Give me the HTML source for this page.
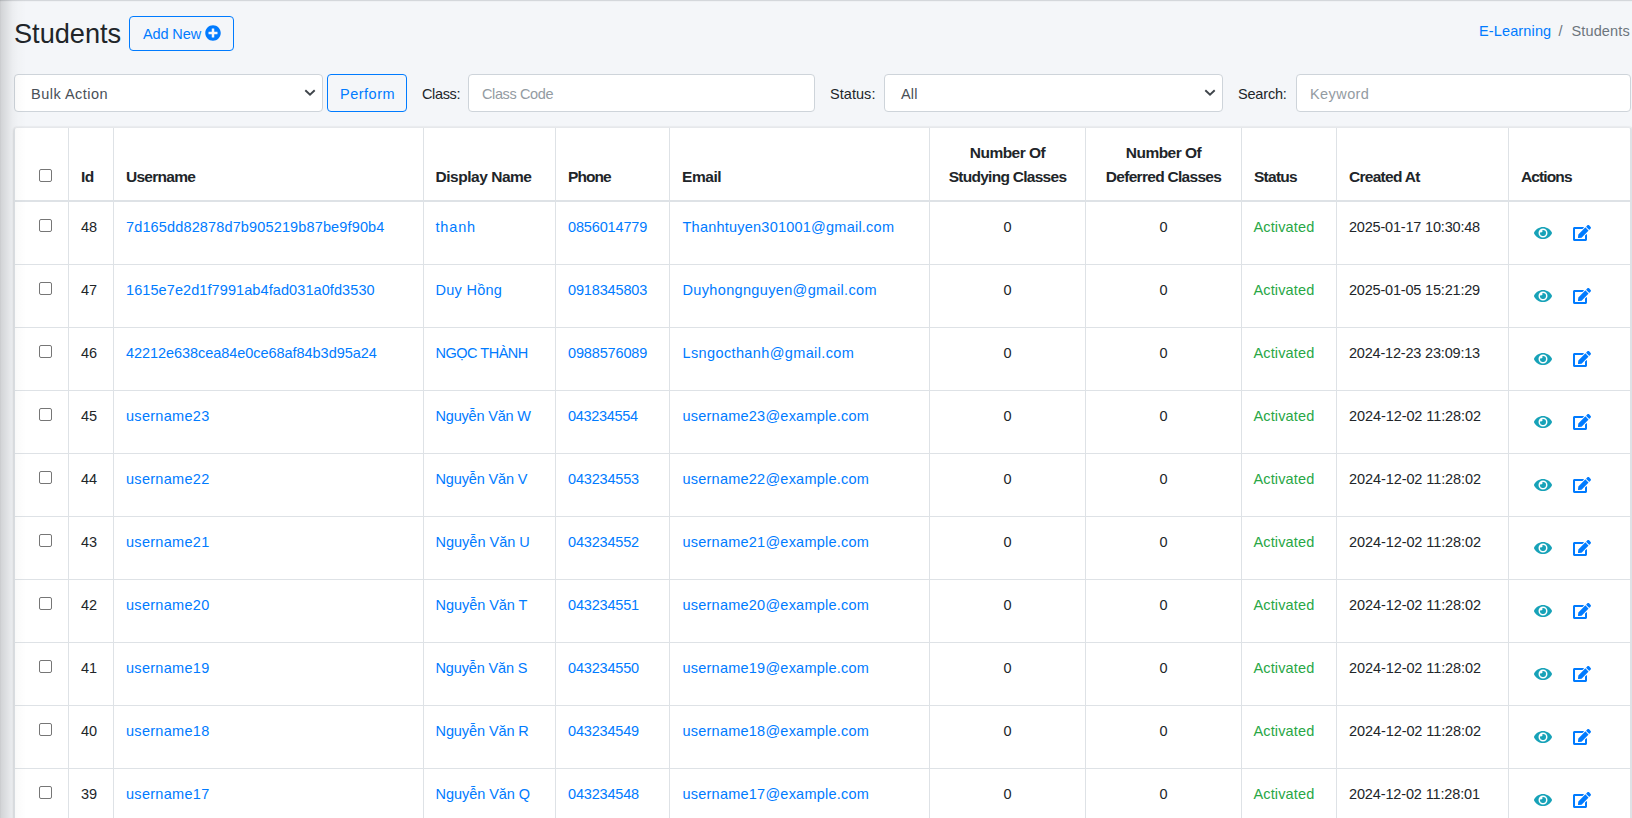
<!DOCTYPE html><html><head><meta charset="utf-8"><title>Students</title><style>
*{box-sizing:border-box}
html,body{margin:0;padding:0}
body{width:1632px;height:818px;overflow:hidden;position:relative;background:#f4f6f9;font-family:"Liberation Sans",sans-serif;color:#212529;font-size:14.5px}
.a{position:absolute;white-space:nowrap}
.t{position:absolute;white-space:nowrap;line-height:24px;height:24px}
.lnk{color:#007bff}
.b{font-weight:bold;font-size:15.5px}
.box{position:absolute;background:#fff;border:1px solid #ced4da;border-radius:4px}
.btn{position:absolute;border:1px solid #007bff;border-radius:4px;color:#007bff}
.hl{position:absolute;background:#dee2e6;height:1px}
.vl{position:absolute;background:#dee2e6;width:1px}
.cb{position:absolute;width:13px;height:13px;border:1px solid #767676;border-radius:2px;background:#fff}
.ctr{text-align:center}
</style></head><body>
<div class="a" style="left:14px;top:16px;letter-spacing:-0.015px;font-size:27.2px;line-height:36px">Students</div>
<div class="btn" style="left:129px;top:16px;width:105px;height:35px"><div class="t" style="left:13px;top:5px;letter-spacing:-0.119px">Add New</div><span class="a" style="left:75px;top:8px"><svg viewBox="0 0 512 512" width="16" height="16" style="display:block"><path fill="#007bff" d="M256 8C119 8 8 119 8 256s111 248 248 248 248-111 248-248S393 8 256 8zm144 276c0 6.6-5.4 12-12 12h-92v92c0 6.6-5.4 12-12 12h-56c-6.6 0-12-5.4-12-12v-92h-92c-6.6 0-12-5.4-12-12v-56c0-6.6 5.4-12 12-12h92v-92c0-6.6 5.4-12 12-12h56c6.6 0 12 5.4 12 12v92h92c6.6 0 12 5.4 12 12v56z"/></svg></span></div>
<div class="t lnk" style="left:1479px;top:19px;letter-spacing:0.136px">E-Learning</div>
<div class="t" style="left:1558.5px;top:19px;color:#6c757d">/</div>
<div class="t" style="left:1571.5px;top:19px;letter-spacing:0.128px;color:#6c757d">Students</div>
<div class="box" style="left:14px;top:74px;width:309px;height:38px"><div class="t" style="left:16px;top:7px;letter-spacing:0.49px;color:#495057">Bulk Action</div><span class="a" style="left:289px;top:14px"><svg width="12" height="8" viewBox="0 0 12 8" style="display:block"><path d="M1.3 1.3 L6 5.8 L10.7 1.3" fill="none" stroke="#3f454b" stroke-width="1.9"/></svg></span></div>
<div class="btn" style="left:327px;top:74px;width:80px;height:38px"><div class="t" style="left:12px;top:7px;letter-spacing:0.5px">Perform</div></div>
<div class="t" style="left:422px;top:82px;letter-spacing:-0.36px">Class:</div>
<div class="box" style="left:468px;top:74px;width:347px;height:38px"><div class="t" style="left:13px;top:7px;letter-spacing:-0.389px;color:#939ba2">Class Code</div></div>
<div class="t" style="left:830px;top:82px;letter-spacing:0.048px">Status:</div>
<div class="box" style="left:884px;top:74px;width:339px;height:38px"><div class="t" style="left:16px;top:7px;letter-spacing:0.2px;color:#495057">All</div><span class="a" style="left:319px;top:14px"><svg width="12" height="8" viewBox="0 0 12 8" style="display:block"><path d="M1.3 1.3 L6 5.8 L10.7 1.3" fill="none" stroke="#3f454b" stroke-width="1.9"/></svg></span></div>
<div class="t" style="left:1238px;top:82px;letter-spacing:-0.183px">Search:</div>
<div class="box" style="left:1296px;top:74px;width:335px;height:38px"><div class="t" style="left:13px;top:7px;letter-spacing:0.417px;color:#939ba2">Keyword</div></div>
<div class="a" style="left:14px;top:127px;width:1618px;height:700px;background:#fff;border-radius:3px 3px 0 0;box-shadow:0 0 1px rgba(0,0,0,.125),0 1px 3px rgba(0,0,0,.2)"></div>
<div class="a" style="left:17px;top:127px;width:1611px;height:1px;background:#e6e8eb"></div>
<div class="vl" style="left:14px;top:130px;height:700px"></div>
<div class="a" style="left:1630px;top:130px;width:2px;height:700px;background:#dee2e6"></div>
<div class="a" style="left:14px;top:127px;width:4px;height:4px;border-top-left-radius:3px;border-left:1px solid #dee2e6;border-top:1px solid #e6e8eb"></div>
<div class="a" style="left:1627px;top:127px;width:5px;height:4px;border-top-right-radius:3px;border-right:2px solid #dee2e6;border-top:1px solid #e6e8eb"></div>
<div class="a" style="left:14px;top:200px;width:1617px;height:2px;background:#dee2e6"></div>
<div class="hl" style="left:14px;top:264px;width:1617px"></div>
<div class="hl" style="left:14px;top:327px;width:1617px"></div>
<div class="hl" style="left:14px;top:390px;width:1617px"></div>
<div class="hl" style="left:14px;top:453px;width:1617px"></div>
<div class="hl" style="left:14px;top:516px;width:1617px"></div>
<div class="hl" style="left:14px;top:579px;width:1617px"></div>
<div class="hl" style="left:14px;top:642px;width:1617px"></div>
<div class="hl" style="left:14px;top:705px;width:1617px"></div>
<div class="hl" style="left:14px;top:768px;width:1617px"></div>
<div class="hl" style="left:14px;top:831px;width:1617px"></div>
<div class="vl" style="left:68px;top:128px;height:700px"></div>
<div class="vl" style="left:113px;top:128px;height:700px"></div>
<div class="vl" style="left:423px;top:128px;height:700px"></div>
<div class="vl" style="left:555px;top:128px;height:700px"></div>
<div class="vl" style="left:669px;top:128px;height:700px"></div>
<div class="vl" style="left:929px;top:128px;height:700px"></div>
<div class="vl" style="left:1085px;top:128px;height:700px"></div>
<div class="vl" style="left:1241px;top:128px;height:700px"></div>
<div class="vl" style="left:1336px;top:128px;height:700px"></div>
<div class="vl" style="left:1508px;top:128px;height:700px"></div>
<div class="cb" style="left:39px;top:169px"></div>
<div class="t b" style="left:81px;top:165px;letter-spacing:-0.5px">Id</div>
<div class="t b" style="left:126px;top:165px;letter-spacing:-0.728px">Username</div>
<div class="t b" style="left:435.5px;top:165px;letter-spacing:-0.472px">Display Name</div>
<div class="t b" style="left:568px;top:165px;letter-spacing:-0.925px">Phone</div>
<div class="t b" style="left:682px;top:165px;letter-spacing:-0.425px">Email</div>
<div class="t b" style="left:930px;top:141px;letter-spacing:-0.514px;width:155px;text-align:center">Number Of</div>
<div class="t b" style="left:930px;top:165px;letter-spacing:-0.727px;width:155px;text-align:center">Studying Classes</div>
<div class="t b" style="left:1086px;top:141px;letter-spacing:-0.514px;width:155px;text-align:center">Number Of</div>
<div class="t b" style="left:1086px;top:165px;letter-spacing:-0.707px;width:155px;text-align:center">Deferred Classes</div>
<div class="t b" style="left:1254px;top:165px;letter-spacing:-0.74px">Status</div>
<div class="t b" style="left:1349px;top:165px;letter-spacing:-0.712px">Created At</div>
<div class="t b" style="left:1521px;top:165px;letter-spacing:-0.884px">Actions</div>
<div class="cb" style="left:39px;top:219px"></div>
<div class="t" style="left:81px;top:215px">48</div>
<div class="t lnk" style="left:126px;top:215px;letter-spacing:0.14px">7d165dd82878d7b905219b87be9f90b4</div>
<div class="t lnk" style="left:435.5px;top:215px;letter-spacing:0.825px">thanh</div>
<div class="t lnk" style="left:568px;top:215px;letter-spacing:-0.145px">0856014779</div>
<div class="t lnk" style="left:682.5px;top:215px;letter-spacing:0.228px">Thanhtuyen301001@gmail.com</div>
<div class="t ctr" style="left:930px;width:155px;top:215px">0</div>
<div class="t ctr" style="left:1086px;width:155px;top:215px">0</div>
<div class="t" style="left:1253.5px;top:215px;letter-spacing:0.134px;color:#28a745">Activated</div>
<div class="t" style="left:1349px;top:215px;letter-spacing:-0.194px">2025-01-17 10:30:48</div>
<div class="a" style="left:1534px;top:225px"><svg viewBox="0 0 576 512" width="18" height="16" style="display:block"><path fill="#17a2b8" d="M572.52 241.4C518.29 135.59 410.93 64 288 64S57.68 135.64 3.48 241.41a32.35 32.35 0 0 0 0 29.19C57.71 376.41 165.07 448 288 448s230.32-71.64 284.52-177.41a32.35 32.35 0 0 0 0-29.19zM288 400a144 144 0 1 1 144-144 143.93 143.93 0 0 1-144 144zm0-240a95.31 95.31 0 0 0-25.31 3.79 47.85 47.85 0 0 1-66.9 66.9A95.78 95.78 0 1 0 288 160z"/></svg></div>
<div class="a" style="left:1573px;top:225px"><svg viewBox="0 0 576 512" width="18" height="16" style="display:block"><path fill="#007bff" d="M402.6 83.2l90.2 90.2c3.8 3.8 3.8 10 0 13.8L274.4 405.6l-92.8 10.3c-12.4 1.4-22.9-9.1-21.5-21.5l10.3-92.8L388.8 83.2c3.8-3.8 10-3.8 13.8 0zm162-22.9l-48.8-48.8c-15.2-15.2-39.9-15.2-55.2 0l-35.4 35.4c-3.8 3.8-3.8 10 0 13.8l90.2 90.2c3.8 3.8 10 3.8 13.8 0l35.4-35.4c15.2-15.3 15.2-40 0-55.2zM384 346.2V448H64V128h229.8c3.2 0 6.2-1.3 8.5-3.5l40-40c7.6-7.6 2.2-20.5-8.5-20.5H48C21.5 64 0 85.5 0 112v352c0 26.5 21.5 48 48 48h352c26.5 0 48-21.5 48-48V306.2c0-10.7-12.9-16-20.5-8.5l-40 40c-2.2 2.3-3.5 5.3-3.5 8.5z"/></svg></div>
<div class="cb" style="left:39px;top:282px"></div>
<div class="t" style="left:81px;top:278px">47</div>
<div class="t lnk" style="left:126px;top:278px;letter-spacing:0.086px">1615e7e2d1f7991ab4fad031a0fd3530</div>
<div class="t lnk" style="left:435.5px;top:278px;letter-spacing:0.271px">Duy Hồng</div>
<div class="t lnk" style="left:568px;top:278px;letter-spacing:-0.145px">0918345803</div>
<div class="t lnk" style="left:682.5px;top:278px;letter-spacing:0.346px">Duyhongnguyen@gmail.com</div>
<div class="t ctr" style="left:930px;width:155px;top:278px">0</div>
<div class="t ctr" style="left:1086px;width:155px;top:278px">0</div>
<div class="t" style="left:1253.5px;top:278px;letter-spacing:0.134px;color:#28a745">Activated</div>
<div class="t" style="left:1349px;top:278px;letter-spacing:-0.194px">2025-01-05 15:21:29</div>
<div class="a" style="left:1534px;top:288px"><svg viewBox="0 0 576 512" width="18" height="16" style="display:block"><path fill="#17a2b8" d="M572.52 241.4C518.29 135.59 410.93 64 288 64S57.68 135.64 3.48 241.41a32.35 32.35 0 0 0 0 29.19C57.71 376.41 165.07 448 288 448s230.32-71.64 284.52-177.41a32.35 32.35 0 0 0 0-29.19zM288 400a144 144 0 1 1 144-144 143.93 143.93 0 0 1-144 144zm0-240a95.31 95.31 0 0 0-25.31 3.79 47.85 47.85 0 0 1-66.9 66.9A95.78 95.78 0 1 0 288 160z"/></svg></div>
<div class="a" style="left:1573px;top:288px"><svg viewBox="0 0 576 512" width="18" height="16" style="display:block"><path fill="#007bff" d="M402.6 83.2l90.2 90.2c3.8 3.8 3.8 10 0 13.8L274.4 405.6l-92.8 10.3c-12.4 1.4-22.9-9.1-21.5-21.5l10.3-92.8L388.8 83.2c3.8-3.8 10-3.8 13.8 0zm162-22.9l-48.8-48.8c-15.2-15.2-39.9-15.2-55.2 0l-35.4 35.4c-3.8 3.8-3.8 10 0 13.8l90.2 90.2c3.8 3.8 10 3.8 13.8 0l35.4-35.4c15.2-15.3 15.2-40 0-55.2zM384 346.2V448H64V128h229.8c3.2 0 6.2-1.3 8.5-3.5l40-40c7.6-7.6 2.2-20.5-8.5-20.5H48C21.5 64 0 85.5 0 112v352c0 26.5 21.5 48 48 48h352c26.5 0 48-21.5 48-48V306.2c0-10.7-12.9-16-20.5-8.5l-40 40c-2.2 2.3-3.5 5.3-3.5 8.5z"/></svg></div>
<div class="cb" style="left:39px;top:345px"></div>
<div class="t" style="left:81px;top:341px">46</div>
<div class="t lnk" style="left:126px;top:341px;letter-spacing:-0.053px">42212e638cea84e0ce68af84b3d95a24</div>
<div class="t lnk" style="left:435.5px;top:341px;letter-spacing:-0.488px">NGỌC THÀNH</div>
<div class="t lnk" style="left:568px;top:341px;letter-spacing:-0.145px">0988576089</div>
<div class="t lnk" style="left:682.5px;top:341px;letter-spacing:0.375px">Lsngocthanh@gmail.com</div>
<div class="t ctr" style="left:930px;width:155px;top:341px">0</div>
<div class="t ctr" style="left:1086px;width:155px;top:341px">0</div>
<div class="t" style="left:1253.5px;top:341px;letter-spacing:0.134px;color:#28a745">Activated</div>
<div class="t" style="left:1349px;top:341px;letter-spacing:-0.194px">2024-12-23 23:09:13</div>
<div class="a" style="left:1534px;top:351px"><svg viewBox="0 0 576 512" width="18" height="16" style="display:block"><path fill="#17a2b8" d="M572.52 241.4C518.29 135.59 410.93 64 288 64S57.68 135.64 3.48 241.41a32.35 32.35 0 0 0 0 29.19C57.71 376.41 165.07 448 288 448s230.32-71.64 284.52-177.41a32.35 32.35 0 0 0 0-29.19zM288 400a144 144 0 1 1 144-144 143.93 143.93 0 0 1-144 144zm0-240a95.31 95.31 0 0 0-25.31 3.79 47.85 47.85 0 0 1-66.9 66.9A95.78 95.78 0 1 0 288 160z"/></svg></div>
<div class="a" style="left:1573px;top:351px"><svg viewBox="0 0 576 512" width="18" height="16" style="display:block"><path fill="#007bff" d="M402.6 83.2l90.2 90.2c3.8 3.8 3.8 10 0 13.8L274.4 405.6l-92.8 10.3c-12.4 1.4-22.9-9.1-21.5-21.5l10.3-92.8L388.8 83.2c3.8-3.8 10-3.8 13.8 0zm162-22.9l-48.8-48.8c-15.2-15.2-39.9-15.2-55.2 0l-35.4 35.4c-3.8 3.8-3.8 10 0 13.8l90.2 90.2c3.8 3.8 10 3.8 13.8 0l35.4-35.4c15.2-15.3 15.2-40 0-55.2zM384 346.2V448H64V128h229.8c3.2 0 6.2-1.3 8.5-3.5l40-40c7.6-7.6 2.2-20.5-8.5-20.5H48C21.5 64 0 85.5 0 112v352c0 26.5 21.5 48 48 48h352c26.5 0 48-21.5 48-48V306.2c0-10.7-12.9-16-20.5-8.5l-40 40c-2.2 2.3-3.5 5.3-3.5 8.5z"/></svg></div>
<div class="cb" style="left:39px;top:408px"></div>
<div class="t" style="left:81px;top:404px">45</div>
<div class="t lnk" style="left:126px;top:404px;letter-spacing:0.29px">username23</div>
<div class="t lnk" style="left:435.5px;top:404px;letter-spacing:-0.19px">Nguyễn Văn W</div>
<div class="t lnk" style="left:568px;top:404px;letter-spacing:-0.3px">043234554</div>
<div class="t lnk" style="left:682.5px;top:404px;letter-spacing:0.228px">username23@example.com</div>
<div class="t ctr" style="left:930px;width:155px;top:404px">0</div>
<div class="t ctr" style="left:1086px;width:155px;top:404px">0</div>
<div class="t" style="left:1253.5px;top:404px;letter-spacing:0.134px;color:#28a745">Activated</div>
<div class="t" style="left:1349px;top:404px;letter-spacing:-0.083px">2024-12-02 11:28:02</div>
<div class="a" style="left:1534px;top:414px"><svg viewBox="0 0 576 512" width="18" height="16" style="display:block"><path fill="#17a2b8" d="M572.52 241.4C518.29 135.59 410.93 64 288 64S57.68 135.64 3.48 241.41a32.35 32.35 0 0 0 0 29.19C57.71 376.41 165.07 448 288 448s230.32-71.64 284.52-177.41a32.35 32.35 0 0 0 0-29.19zM288 400a144 144 0 1 1 144-144 143.93 143.93 0 0 1-144 144zm0-240a95.31 95.31 0 0 0-25.31 3.79 47.85 47.85 0 0 1-66.9 66.9A95.78 95.78 0 1 0 288 160z"/></svg></div>
<div class="a" style="left:1573px;top:414px"><svg viewBox="0 0 576 512" width="18" height="16" style="display:block"><path fill="#007bff" d="M402.6 83.2l90.2 90.2c3.8 3.8 3.8 10 0 13.8L274.4 405.6l-92.8 10.3c-12.4 1.4-22.9-9.1-21.5-21.5l10.3-92.8L388.8 83.2c3.8-3.8 10-3.8 13.8 0zm162-22.9l-48.8-48.8c-15.2-15.2-39.9-15.2-55.2 0l-35.4 35.4c-3.8 3.8-3.8 10 0 13.8l90.2 90.2c3.8 3.8 10 3.8 13.8 0l35.4-35.4c15.2-15.3 15.2-40 0-55.2zM384 346.2V448H64V128h229.8c3.2 0 6.2-1.3 8.5-3.5l40-40c7.6-7.6 2.2-20.5-8.5-20.5H48C21.5 64 0 85.5 0 112v352c0 26.5 21.5 48 48 48h352c26.5 0 48-21.5 48-48V306.2c0-10.7-12.9-16-20.5-8.5l-40 40c-2.2 2.3-3.5 5.3-3.5 8.5z"/></svg></div>
<div class="cb" style="left:39px;top:471px"></div>
<div class="t" style="left:81px;top:467px">44</div>
<div class="t lnk" style="left:126px;top:467px;letter-spacing:0.29px">username22</div>
<div class="t lnk" style="left:435.5px;top:467px;letter-spacing:-0.135px">Nguyễn Văn V</div>
<div class="t lnk" style="left:568px;top:467px;letter-spacing:-0.175px">043234553</div>
<div class="t lnk" style="left:682.5px;top:467px;letter-spacing:0.228px">username22@example.com</div>
<div class="t ctr" style="left:930px;width:155px;top:467px">0</div>
<div class="t ctr" style="left:1086px;width:155px;top:467px">0</div>
<div class="t" style="left:1253.5px;top:467px;letter-spacing:0.134px;color:#28a745">Activated</div>
<div class="t" style="left:1349px;top:467px;letter-spacing:-0.083px">2024-12-02 11:28:02</div>
<div class="a" style="left:1534px;top:477px"><svg viewBox="0 0 576 512" width="18" height="16" style="display:block"><path fill="#17a2b8" d="M572.52 241.4C518.29 135.59 410.93 64 288 64S57.68 135.64 3.48 241.41a32.35 32.35 0 0 0 0 29.19C57.71 376.41 165.07 448 288 448s230.32-71.64 284.52-177.41a32.35 32.35 0 0 0 0-29.19zM288 400a144 144 0 1 1 144-144 143.93 143.93 0 0 1-144 144zm0-240a95.31 95.31 0 0 0-25.31 3.79 47.85 47.85 0 0 1-66.9 66.9A95.78 95.78 0 1 0 288 160z"/></svg></div>
<div class="a" style="left:1573px;top:477px"><svg viewBox="0 0 576 512" width="18" height="16" style="display:block"><path fill="#007bff" d="M402.6 83.2l90.2 90.2c3.8 3.8 3.8 10 0 13.8L274.4 405.6l-92.8 10.3c-12.4 1.4-22.9-9.1-21.5-21.5l10.3-92.8L388.8 83.2c3.8-3.8 10-3.8 13.8 0zm162-22.9l-48.8-48.8c-15.2-15.2-39.9-15.2-55.2 0l-35.4 35.4c-3.8 3.8-3.8 10 0 13.8l90.2 90.2c3.8 3.8 10 3.8 13.8 0l35.4-35.4c15.2-15.3 15.2-40 0-55.2zM384 346.2V448H64V128h229.8c3.2 0 6.2-1.3 8.5-3.5l40-40c7.6-7.6 2.2-20.5-8.5-20.5H48C21.5 64 0 85.5 0 112v352c0 26.5 21.5 48 48 48h352c26.5 0 48-21.5 48-48V306.2c0-10.7-12.9-16-20.5-8.5l-40 40c-2.2 2.3-3.5 5.3-3.5 8.5z"/></svg></div>
<div class="cb" style="left:39px;top:534px"></div>
<div class="t" style="left:81px;top:530px">43</div>
<div class="t lnk" style="left:126px;top:530px;letter-spacing:0.29px">username21</div>
<div class="t lnk" style="left:435.5px;top:530px;letter-spacing:-0.001px">Nguyễn Văn U</div>
<div class="t lnk" style="left:568px;top:530px;letter-spacing:-0.175px">043234552</div>
<div class="t lnk" style="left:682.5px;top:530px;letter-spacing:0.228px">username21@example.com</div>
<div class="t ctr" style="left:930px;width:155px;top:530px">0</div>
<div class="t ctr" style="left:1086px;width:155px;top:530px">0</div>
<div class="t" style="left:1253.5px;top:530px;letter-spacing:0.134px;color:#28a745">Activated</div>
<div class="t" style="left:1349px;top:530px;letter-spacing:-0.083px">2024-12-02 11:28:02</div>
<div class="a" style="left:1534px;top:540px"><svg viewBox="0 0 576 512" width="18" height="16" style="display:block"><path fill="#17a2b8" d="M572.52 241.4C518.29 135.59 410.93 64 288 64S57.68 135.64 3.48 241.41a32.35 32.35 0 0 0 0 29.19C57.71 376.41 165.07 448 288 448s230.32-71.64 284.52-177.41a32.35 32.35 0 0 0 0-29.19zM288 400a144 144 0 1 1 144-144 143.93 143.93 0 0 1-144 144zm0-240a95.31 95.31 0 0 0-25.31 3.79 47.85 47.85 0 0 1-66.9 66.9A95.78 95.78 0 1 0 288 160z"/></svg></div>
<div class="a" style="left:1573px;top:540px"><svg viewBox="0 0 576 512" width="18" height="16" style="display:block"><path fill="#007bff" d="M402.6 83.2l90.2 90.2c3.8 3.8 3.8 10 0 13.8L274.4 405.6l-92.8 10.3c-12.4 1.4-22.9-9.1-21.5-21.5l10.3-92.8L388.8 83.2c3.8-3.8 10-3.8 13.8 0zm162-22.9l-48.8-48.8c-15.2-15.2-39.9-15.2-55.2 0l-35.4 35.4c-3.8 3.8-3.8 10 0 13.8l90.2 90.2c3.8 3.8 10 3.8 13.8 0l35.4-35.4c15.2-15.3 15.2-40 0-55.2zM384 346.2V448H64V128h229.8c3.2 0 6.2-1.3 8.5-3.5l40-40c7.6-7.6 2.2-20.5-8.5-20.5H48C21.5 64 0 85.5 0 112v352c0 26.5 21.5 48 48 48h352c26.5 0 48-21.5 48-48V306.2c0-10.7-12.9-16-20.5-8.5l-40 40c-2.2 2.3-3.5 5.3-3.5 8.5z"/></svg></div>
<div class="cb" style="left:39px;top:597px"></div>
<div class="t" style="left:81px;top:593px">42</div>
<div class="t lnk" style="left:126px;top:593px;letter-spacing:0.29px">username20</div>
<div class="t lnk" style="left:435.5px;top:593px;letter-spacing:-0.044px">Nguyễn Văn T</div>
<div class="t lnk" style="left:568px;top:593px;letter-spacing:-0.175px">043234551</div>
<div class="t lnk" style="left:682.5px;top:593px;letter-spacing:0.228px">username20@example.com</div>
<div class="t ctr" style="left:930px;width:155px;top:593px">0</div>
<div class="t ctr" style="left:1086px;width:155px;top:593px">0</div>
<div class="t" style="left:1253.5px;top:593px;letter-spacing:0.134px;color:#28a745">Activated</div>
<div class="t" style="left:1349px;top:593px;letter-spacing:-0.083px">2024-12-02 11:28:02</div>
<div class="a" style="left:1534px;top:603px"><svg viewBox="0 0 576 512" width="18" height="16" style="display:block"><path fill="#17a2b8" d="M572.52 241.4C518.29 135.59 410.93 64 288 64S57.68 135.64 3.48 241.41a32.35 32.35 0 0 0 0 29.19C57.71 376.41 165.07 448 288 448s230.32-71.64 284.52-177.41a32.35 32.35 0 0 0 0-29.19zM288 400a144 144 0 1 1 144-144 143.93 143.93 0 0 1-144 144zm0-240a95.31 95.31 0 0 0-25.31 3.79 47.85 47.85 0 0 1-66.9 66.9A95.78 95.78 0 1 0 288 160z"/></svg></div>
<div class="a" style="left:1573px;top:603px"><svg viewBox="0 0 576 512" width="18" height="16" style="display:block"><path fill="#007bff" d="M402.6 83.2l90.2 90.2c3.8 3.8 3.8 10 0 13.8L274.4 405.6l-92.8 10.3c-12.4 1.4-22.9-9.1-21.5-21.5l10.3-92.8L388.8 83.2c3.8-3.8 10-3.8 13.8 0zm162-22.9l-48.8-48.8c-15.2-15.2-39.9-15.2-55.2 0l-35.4 35.4c-3.8 3.8-3.8 10 0 13.8l90.2 90.2c3.8 3.8 10 3.8 13.8 0l35.4-35.4c15.2-15.3 15.2-40 0-55.2zM384 346.2V448H64V128h229.8c3.2 0 6.2-1.3 8.5-3.5l40-40c7.6-7.6 2.2-20.5-8.5-20.5H48C21.5 64 0 85.5 0 112v352c0 26.5 21.5 48 48 48h352c26.5 0 48-21.5 48-48V306.2c0-10.7-12.9-16-20.5-8.5l-40 40c-2.2 2.3-3.5 5.3-3.5 8.5z"/></svg></div>
<div class="cb" style="left:39px;top:660px"></div>
<div class="t" style="left:81px;top:656px">41</div>
<div class="t lnk" style="left:126px;top:656px;letter-spacing:0.29px">username19</div>
<div class="t lnk" style="left:435.5px;top:656px;letter-spacing:-0.135px">Nguyễn Văn S</div>
<div class="t lnk" style="left:568px;top:656px;letter-spacing:-0.175px">043234550</div>
<div class="t lnk" style="left:682.5px;top:656px;letter-spacing:0.228px">username19@example.com</div>
<div class="t ctr" style="left:930px;width:155px;top:656px">0</div>
<div class="t ctr" style="left:1086px;width:155px;top:656px">0</div>
<div class="t" style="left:1253.5px;top:656px;letter-spacing:0.134px;color:#28a745">Activated</div>
<div class="t" style="left:1349px;top:656px;letter-spacing:-0.083px">2024-12-02 11:28:02</div>
<div class="a" style="left:1534px;top:666px"><svg viewBox="0 0 576 512" width="18" height="16" style="display:block"><path fill="#17a2b8" d="M572.52 241.4C518.29 135.59 410.93 64 288 64S57.68 135.64 3.48 241.41a32.35 32.35 0 0 0 0 29.19C57.71 376.41 165.07 448 288 448s230.32-71.64 284.52-177.41a32.35 32.35 0 0 0 0-29.19zM288 400a144 144 0 1 1 144-144 143.93 143.93 0 0 1-144 144zm0-240a95.31 95.31 0 0 0-25.31 3.79 47.85 47.85 0 0 1-66.9 66.9A95.78 95.78 0 1 0 288 160z"/></svg></div>
<div class="a" style="left:1573px;top:666px"><svg viewBox="0 0 576 512" width="18" height="16" style="display:block"><path fill="#007bff" d="M402.6 83.2l90.2 90.2c3.8 3.8 3.8 10 0 13.8L274.4 405.6l-92.8 10.3c-12.4 1.4-22.9-9.1-21.5-21.5l10.3-92.8L388.8 83.2c3.8-3.8 10-3.8 13.8 0zm162-22.9l-48.8-48.8c-15.2-15.2-39.9-15.2-55.2 0l-35.4 35.4c-3.8 3.8-3.8 10 0 13.8l90.2 90.2c3.8 3.8 10 3.8 13.8 0l35.4-35.4c15.2-15.3 15.2-40 0-55.2zM384 346.2V448H64V128h229.8c3.2 0 6.2-1.3 8.5-3.5l40-40c7.6-7.6 2.2-20.5-8.5-20.5H48C21.5 64 0 85.5 0 112v352c0 26.5 21.5 48 48 48h352c26.5 0 48-21.5 48-48V306.2c0-10.7-12.9-16-20.5-8.5l-40 40c-2.2 2.3-3.5 5.3-3.5 8.5z"/></svg></div>
<div class="cb" style="left:39px;top:723px"></div>
<div class="t" style="left:81px;top:719px">40</div>
<div class="t lnk" style="left:126px;top:719px;letter-spacing:0.29px">username18</div>
<div class="t lnk" style="left:435.5px;top:719px;letter-spacing:-0.09px">Nguyễn Văn R</div>
<div class="t lnk" style="left:568px;top:719px;letter-spacing:-0.175px">043234549</div>
<div class="t lnk" style="left:682.5px;top:719px;letter-spacing:0.228px">username18@example.com</div>
<div class="t ctr" style="left:930px;width:155px;top:719px">0</div>
<div class="t ctr" style="left:1086px;width:155px;top:719px">0</div>
<div class="t" style="left:1253.5px;top:719px;letter-spacing:0.134px;color:#28a745">Activated</div>
<div class="t" style="left:1349px;top:719px;letter-spacing:-0.083px">2024-12-02 11:28:02</div>
<div class="a" style="left:1534px;top:729px"><svg viewBox="0 0 576 512" width="18" height="16" style="display:block"><path fill="#17a2b8" d="M572.52 241.4C518.29 135.59 410.93 64 288 64S57.68 135.64 3.48 241.41a32.35 32.35 0 0 0 0 29.19C57.71 376.41 165.07 448 288 448s230.32-71.64 284.52-177.41a32.35 32.35 0 0 0 0-29.19zM288 400a144 144 0 1 1 144-144 143.93 143.93 0 0 1-144 144zm0-240a95.31 95.31 0 0 0-25.31 3.79 47.85 47.85 0 0 1-66.9 66.9A95.78 95.78 0 1 0 288 160z"/></svg></div>
<div class="a" style="left:1573px;top:729px"><svg viewBox="0 0 576 512" width="18" height="16" style="display:block"><path fill="#007bff" d="M402.6 83.2l90.2 90.2c3.8 3.8 3.8 10 0 13.8L274.4 405.6l-92.8 10.3c-12.4 1.4-22.9-9.1-21.5-21.5l10.3-92.8L388.8 83.2c3.8-3.8 10-3.8 13.8 0zm162-22.9l-48.8-48.8c-15.2-15.2-39.9-15.2-55.2 0l-35.4 35.4c-3.8 3.8-3.8 10 0 13.8l90.2 90.2c3.8 3.8 10 3.8 13.8 0l35.4-35.4c15.2-15.3 15.2-40 0-55.2zM384 346.2V448H64V128h229.8c3.2 0 6.2-1.3 8.5-3.5l40-40c7.6-7.6 2.2-20.5-8.5-20.5H48C21.5 64 0 85.5 0 112v352c0 26.5 21.5 48 48 48h352c26.5 0 48-21.5 48-48V306.2c0-10.7-12.9-16-20.5-8.5l-40 40c-2.2 2.3-3.5 5.3-3.5 8.5z"/></svg></div>
<div class="cb" style="left:39px;top:786px"></div>
<div class="t" style="left:81px;top:782px">39</div>
<div class="t lnk" style="left:126px;top:782px;letter-spacing:0.29px">username17</div>
<div class="t lnk" style="left:435.5px;top:782px;letter-spacing:-0.047px">Nguyễn Văn Q</div>
<div class="t lnk" style="left:568px;top:782px;letter-spacing:-0.175px">043234548</div>
<div class="t lnk" style="left:682.5px;top:782px;letter-spacing:0.228px">username17@example.com</div>
<div class="t ctr" style="left:930px;width:155px;top:782px">0</div>
<div class="t ctr" style="left:1086px;width:155px;top:782px">0</div>
<div class="t" style="left:1253.5px;top:782px;letter-spacing:0.134px;color:#28a745">Activated</div>
<div class="t" style="left:1349px;top:782px;letter-spacing:-0.139px">2024-12-02 11:28:01</div>
<div class="a" style="left:1534px;top:792px"><svg viewBox="0 0 576 512" width="18" height="16" style="display:block"><path fill="#17a2b8" d="M572.52 241.4C518.29 135.59 410.93 64 288 64S57.68 135.64 3.48 241.41a32.35 32.35 0 0 0 0 29.19C57.71 376.41 165.07 448 288 448s230.32-71.64 284.52-177.41a32.35 32.35 0 0 0 0-29.19zM288 400a144 144 0 1 1 144-144 143.93 143.93 0 0 1-144 144zm0-240a95.31 95.31 0 0 0-25.31 3.79 47.85 47.85 0 0 1-66.9 66.9A95.78 95.78 0 1 0 288 160z"/></svg></div>
<div class="a" style="left:1573px;top:792px"><svg viewBox="0 0 576 512" width="18" height="16" style="display:block"><path fill="#007bff" d="M402.6 83.2l90.2 90.2c3.8 3.8 3.8 10 0 13.8L274.4 405.6l-92.8 10.3c-12.4 1.4-22.9-9.1-21.5-21.5l10.3-92.8L388.8 83.2c3.8-3.8 10-3.8 13.8 0zm162-22.9l-48.8-48.8c-15.2-15.2-39.9-15.2-55.2 0l-35.4 35.4c-3.8 3.8-3.8 10 0 13.8l90.2 90.2c3.8 3.8 10 3.8 13.8 0l35.4-35.4c15.2-15.3 15.2-40 0-55.2zM384 346.2V448H64V128h229.8c3.2 0 6.2-1.3 8.5-3.5l40-40c7.6-7.6 2.2-20.5-8.5-20.5H48C21.5 64 0 85.5 0 112v352c0 26.5 21.5 48 48 48h352c26.5 0 48-21.5 48-48V306.2c0-10.7-12.9-16-20.5-8.5l-40 40c-2.2 2.3-3.5 5.3-3.5 8.5z"/></svg></div>
<div class="a" style="left:0;top:0;width:1632px;height:1px;background:#d4d7db"></div>
<div class="a" style="left:0;top:1px;width:1632px;height:1px;background:rgba(0,0,0,.02)"></div>
<div class="a" style="left:0;top:0;width:26px;height:818px;background:linear-gradient(to right,rgba(0,0,0,.18) 0px,rgba(0,0,0,.135) 1.5px,rgba(0,0,0,.098) 5.5px,rgba(0,0,0,.061) 9.5px,rgba(0,0,0,.037) 12.5px,rgba(0,0,0,.016) 17.5px,rgba(0,0,0,0) 26px)"></div>
</body></html>
